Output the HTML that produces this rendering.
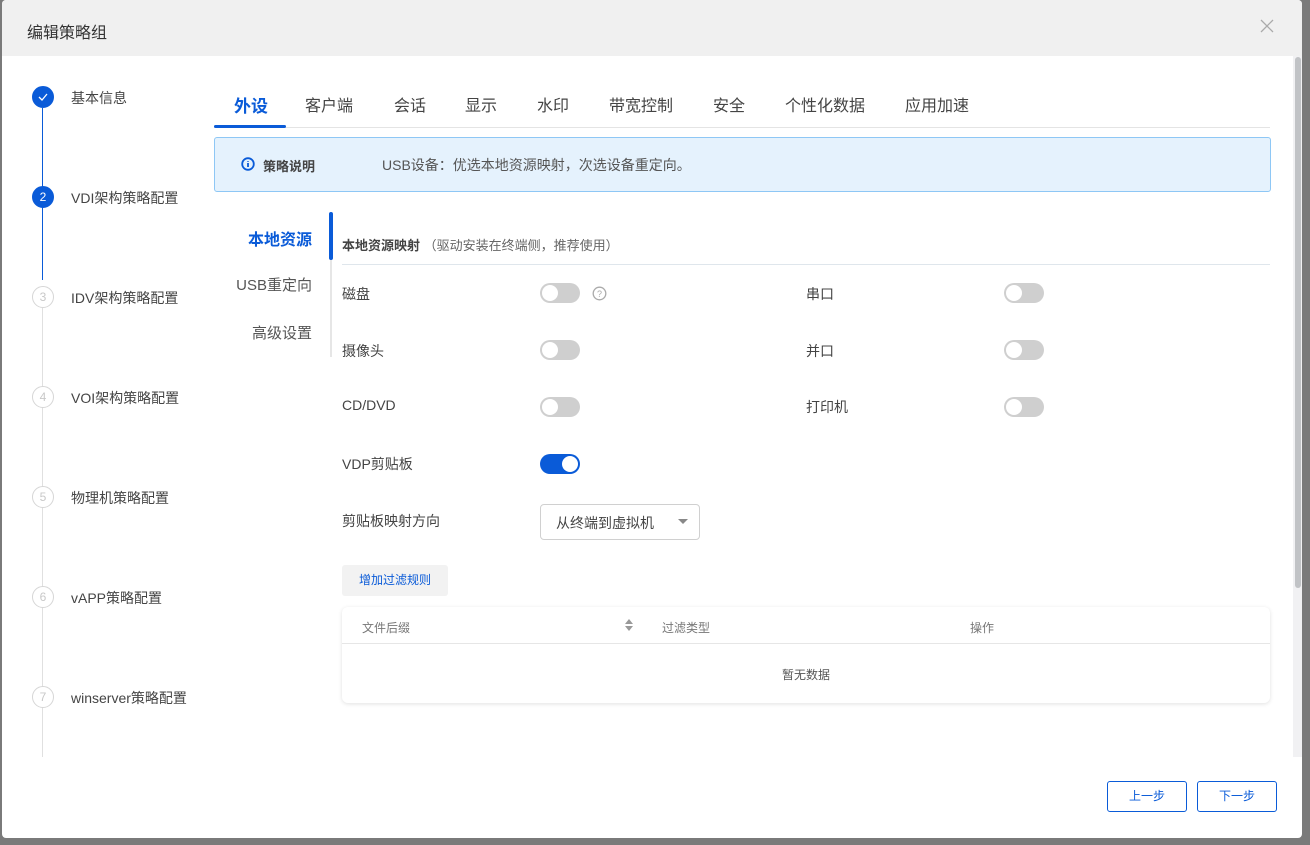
<!DOCTYPE html>
<html><head><meta charset="utf-8"><style>
*{margin:0;padding:0;box-sizing:border-box}
body{width:1310px;height:845px;background:#7a7a7a;font-family:"Liberation Sans","Noto Sans CJK SC",sans-serif;position:relative;overflow:hidden;color:#333}
.a{position:absolute}
.modal{left:2px;top:0;width:1300px;height:838px;background:#fff;border-radius:4px;overflow:hidden}
.hd{left:0;top:0;width:1300px;height:56px;background:#f0f0f0}
.t{white-space:nowrap}
.circ{width:22px;height:22px;border-radius:50%;text-align:center;line-height:20px;font-size:12px}
.done{background:#0a5bd8;color:#fff;border:1px solid #0a5bd8}
.todo{border:1px solid #d6d6d6;color:#c8c8c8;background:#fff}
.sl{font-size:14px;color:#444}
.tab{font-size:16px;color:#444;top:92px}
.tg{width:40px;height:20px;border-radius:10px;background:#cfcfcf}
.tg::after{content:"";position:absolute;left:2px;top:2px;width:16px;height:16px;border-radius:50%;background:#fff}
.tg.on{background:#0a5bd8}.tg.on::after{left:22px}
.lb{font-size:14px;color:#444}
.btn{width:80px;height:31px;border:1px solid #0a5bd8;border-radius:3px;color:#0a5bd8;font-size:12px;text-align:center;line-height:29px}
</style></head><body>
<div class="a modal">
 <div class="a hd"></div>
 <div class="a t" style="left:25px;top:19px;font-size:16px;color:#333">编辑策略组</div>
 <div class="a" style="left:1258px;top:19px;width:14px;height:14px">
  <svg width="14" height="14"><path d="M1 1L13 13M13 1L1 13" stroke="#aaa" stroke-width="1.3"/></svg></div>
 <!-- steps -->
 <div class="a" style="left:40px;top:108px;width:1px;height:172px;background:#0a5bd8"></div>
 <div class="a" style="left:40px;top:308px;width:1px;height:449px;background:#e0e0e0"></div>
 <div class="a circ done" style="left:30px;top:86px"><svg width="10" height="10" style="margin-top:5px"><path d="M1 5L4 8L9 2" stroke="#fff" stroke-width="1.3" fill="none"/></svg></div>
 <div class="a t sl" style="left:69px;top:88px">基本信息</div>
 <div class="a circ done" style="left:30px;top:186px">2</div>
 <div class="a t sl" style="left:69px;top:188px">VDI架构策略配置</div>
 <div class="a circ todo" style="left:30px;top:286px">3</div>
 <div class="a t sl" style="left:69px;top:288px">IDV架构策略配置</div>
 <div class="a circ todo" style="left:30px;top:386px">4</div>
 <div class="a t sl" style="left:69px;top:388px">VOI架构策略配置</div>
 <div class="a circ todo" style="left:30px;top:486px">5</div>
 <div class="a t sl" style="left:69px;top:488px">物理机策略配置</div>
 <div class="a circ todo" style="left:30px;top:586px">6</div>
 <div class="a t sl" style="left:69px;top:588px">vAPP策略配置</div>
 <div class="a circ todo" style="left:30px;top:686px">7</div>
 <div class="a t sl" style="left:69px;top:688px">winserver策略配置</div>
 <!-- tabs -->
 <div class="a" style="left:212px;top:127px;width:1056px;height:1px;background:#e4e4e4"></div>
 <div class="a" style="left:212px;top:125px;width:72px;height:3px;background:#0a5bd8;border-radius:2px"></div>
 <div class="a t tab" style="left:232px;color:#0a5bd8;font-weight:bold;font-size:17px">外设</div>
 <div class="a t tab" style="left:303px">客户端</div>
 <div class="a t tab" style="left:392px">会话</div>
 <div class="a t tab" style="left:463px">显示</div>
 <div class="a t tab" style="left:535px">水印</div>
 <div class="a t tab" style="left:607px">带宽控制</div>
 <div class="a t tab" style="left:711px">安全</div>
 <div class="a t tab" style="left:783px">个性化数据</div>
 <div class="a t tab" style="left:903px">应用加速</div>
 <!-- info -->
 <div class="a" style="left:212px;top:137px;width:1057px;height:55px;background:#e5f2fd;border:1px solid #8ec7f5;border-radius:3px"></div>
 <svg class="a" style="left:239px;top:157px" width="14" height="14"><circle cx="7" cy="7" r="5.8" stroke="#0a5bd8" stroke-width="1.8" fill="none"/><path d="M7 6V10M7 4V4.8" stroke="#0a5bd8" stroke-width="1.8"/></svg>
 <div class="a t" style="left:261px;top:156px;font-size:13px;color:#444;font-weight:bold">策略说明</div>
 <div class="a t" style="left:380px;top:155px;font-size:14px;color:#555">USB设备：优选本地资源映射，次选设备重定向。</div>
 <!-- subnav -->
 <div class="a" style="left:328px;top:212px;width:2px;height:145px;background:#e6e6e6"></div>
 <div class="a" style="left:327px;top:212px;width:4px;height:48px;background:#0a5bd8;border-radius:2px"></div>
 <div class="a t" style="right:990px;top:226px;font-size:16px;color:#0a5bd8;font-weight:bold">本地资源</div>
 <div class="a t" style="right:990px;top:274px;font-size:15px;color:#555">USB重定向</div>
 <div class="a t" style="right:990px;top:322px;font-size:15px;color:#555">高级设置</div>
 <div class="a t" style="left:340px;top:235px;font-size:13px;color:#444"><b>本地资源映射</b> <span style="color:#666">（驱动安装在终端侧，推荐使用）</span></div>
 <div class="a" style="left:340px;top:264px;width:928px;height:1px;background:#dfe6ec"></div>
 <div class="a t lb" style="left:340px;top:284px">磁盘</div>
 <div class="a tg" style="left:538px;top:283px"></div>
 <svg class="a" style="left:590px;top:286px" width="15" height="15"><circle cx="7.5" cy="7.5" r="6.3" stroke="#aaa" stroke-width="1.3" fill="none"/><text x="7.5" y="11" font-size="9" text-anchor="middle" fill="#aaa" font-family="Liberation Sans">?</text></svg>
 <div class="a t lb" style="left:340px;top:341px">摄像头</div>
 <div class="a tg" style="left:538px;top:340px"></div>
 <div class="a t lb" style="left:340px;top:397px">CD/DVD</div>
 <div class="a tg" style="left:538px;top:397px"></div>
 <div class="a t lb" style="left:340px;top:454px">VDP剪贴板</div>
 <div class="a tg on" style="left:538px;top:454px"></div>
 <div class="a t lb" style="left:804px;top:284px">串口</div>
 <div class="a tg" style="left:1002px;top:283px"></div>
 <div class="a t lb" style="left:804px;top:341px">并口</div>
 <div class="a tg" style="left:1002px;top:340px"></div>
 <div class="a t lb" style="left:804px;top:397px">打印机</div>
 <div class="a tg" style="left:1002px;top:397px"></div>
 <div class="a t lb" style="left:340px;top:511px">剪贴板映射方向</div>
 <div class="a" style="left:538px;top:504px;width:160px;height:36px;border:1px solid #d0d0d0;border-radius:4px"></div>
 <div class="a t" style="left:554px;top:513px;font-size:14px;color:#444">从终端到虚拟机</div>
 <div class="a" style="left:676px;top:519px;width:0;height:0;border-left:5px solid transparent;border-right:5px solid transparent;border-top:5px solid #888"></div>
 <div class="a" style="left:340px;top:565px;width:106px;height:31px;background:#f2f2f2;border-radius:3px;color:#0a5bd8;font-size:12px;text-align:center;line-height:31px">增加过滤规则</div>
 <div class="a" style="left:340px;top:607px;width:928px;height:96px;background:#fff;border-radius:6px;box-shadow:0 1px 4px rgba(0,0,0,.12)"></div>
 <div class="a" style="left:340px;top:643px;width:928px;height:1px;background:#e6e6e6"></div>
 <div class="a t" style="left:360px;top:619px;font-size:12px;color:#777">文件后缀</div>
 <svg class="a" style="left:622px;top:618px" width="10" height="14"><path d="M1 6L5 1L9 6Z M1 8L5 13L9 8Z" fill="#999"/></svg>
 <div class="a t" style="left:660px;top:619px;font-size:12px;color:#777">过滤类型</div>
 <div class="a t" style="left:968px;top:619px;font-size:12px;color:#777">操作</div>
 <div class="a t" style="left:780px;top:666px;font-size:12px;color:#555">暂无数据</div>
 <!-- scrollbar -->
 <div class="a" style="left:1291px;top:56px;width:9px;height:701px;background:#f1f1f3"></div>
 <div class="a" style="left:1293px;top:57px;width:6px;height:531px;background:#c1c3c6;border-radius:3px"></div>
 <div class="a btn" style="left:1105px;top:781px">上一步</div>
 <div class="a btn" style="left:1195px;top:781px">下一步</div>
</div>
</body></html>
